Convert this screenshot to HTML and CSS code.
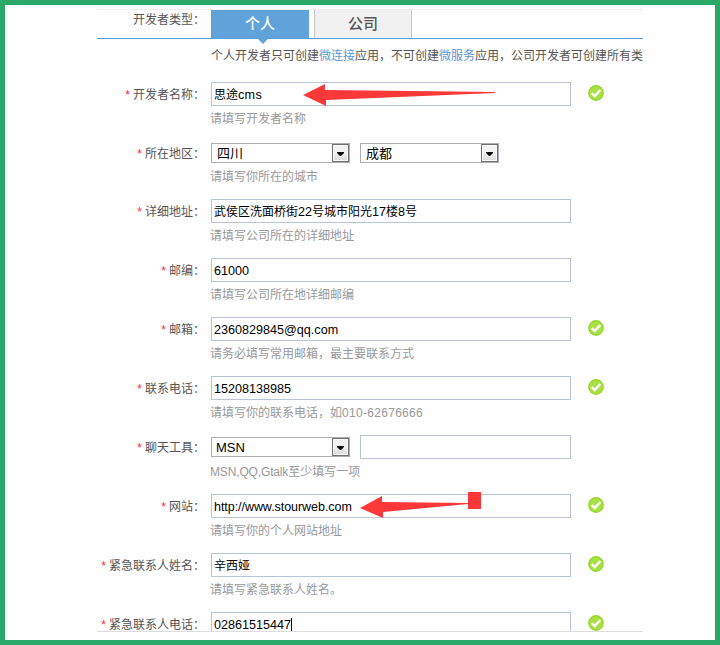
FILE: index.html
```html
<!DOCTYPE html>
<html lang="zh-CN">
<head>
<meta charset="utf-8">
<title>开发者信息</title>
<link rel="stylesheet" href="styles.css">
</head>
<body>
<svg class="defs" width="0" height="0">
  <defs>
    <symbol id="ok" viewBox="0 0 16 16">
      <circle cx="8" cy="8" r="7.9" fill="#98d62c"/>
      <circle cx="8" cy="8" r="6.6" fill="#a8e046"/>
      <path d="M3.7 8.2 6.7 11 12.3 5" fill="none" stroke="#fff" stroke-width="2.4"/>
    </symbol>
    <symbol id="drop" viewBox="0 0 7 4"><path d="M0 0H7V1L4 4H3L0 1Z" fill="#000"/></symbol>
  </defs>
</svg>
<main class="panel">
  <div class="type">
    <div class="label">开发者类型：</div>
    <div class="tabs"><div class="tab active">个人</div><div class="tab company">公司</div></div>
  </div>
  <p class="note">个人开发者只可创建<a>微连接</a>应用，不可创建<a>微服务</a>应用，公司开发者可创建所有类</p>

  <div class="row first">
    <div class="label"><i>*</i>开发者名称：</div>
    <div class="field">
      <div class="controls"><div class="input">思途<span class="cms">cms</span></div><svg class="ok"><use href="#ok"/></svg></div>
      <div class="hint">请填写开发者名称</div>
    </div>
    <svg class="arrow one" width="194" height="24" viewBox="0 0 194 24"><path d="M0 11 22 0V6L192 8V9L23 16V22Z" fill="#fd3838"/></svg>
  </div>
  <div class="row region">
    <div class="label"><i>*</i>所在地区：</div>
    <div class="field">
      <div class="controls"><div class="select">四川<b><svg class="drop"><use href="#drop"/></svg></b></div><div class="select">成都<b><svg class="drop"><use href="#drop"/></svg></b></div></div>
      <div class="hint">请填写你所在的城市</div>
    </div>
  </div>
  <div class="row">
    <div class="label"><i>*</i>详细地址：</div>
    <div class="field">
      <div class="controls"><div class="input">武侯区洗面桥街<span>22</span>号城市阳光<span>17</span>楼<span>8</span>号</div></div>
      <div class="hint">请填写公司所在的详细地址</div>
    </div>
  </div>
  <div class="row">
    <div class="label"><i>*</i>邮编：</div>
    <div class="field">
      <div class="controls"><div class="input"><span>61000</span></div></div>
      <div class="hint">请填写公司所在地详细邮编</div>
    </div>
  </div>
  <div class="row">
    <div class="label"><i>*</i>邮箱：</div>
    <div class="field">
      <div class="controls"><div class="input"><span>2360829845@qq.com</span></div><svg class="ok"><use href="#ok"/></svg></div>
      <div class="hint">请务必填写常用邮箱，最主要联系方式</div>
    </div>
  </div>
  <div class="row">
    <div class="label"><i>*</i>联系电话：</div>
    <div class="field">
      <div class="controls"><div class="input"><span>15208138985</span></div><svg class="ok"><use href="#ok"/></svg></div>
      <div class="hint">请填写你的联系电话，如<span>010-62676666</span></div>
    </div>
  </div>
  <div class="row chat">
    <div class="label"><i>*</i>聊天工具：</div>
    <div class="field">
      <div class="controls"><div class="select">MSN<b><svg class="drop"><use href="#drop"/></svg></b></div><div class="input short"></div></div>
      <div class="hint"><span class="tight">MSN,QQ,Gtalk</span>至少填写一项</div>
    </div>
  </div>
  <div class="row">
    <div class="label"><i>*</i>网站：</div>
    <div class="field">
      <div class="controls"><div class="input"><span class="url">http://www.stourweb.com</span></div><svg class="ok"><use href="#ok"/></svg></div>
      <div class="hint">请填写你的个人网站地址</div>
    </div>
    <svg class="arrow two" width="122" height="28" viewBox="0 0 122 28"><path d="M0 16 22 4V10L108 11V12L23 20V26Z" fill="#fd3838"/><path d="M108 0H121V17H108Z" fill="#fd3838"/></svg>
  </div>
  <div class="row">
    <div class="label"><i>*</i>紧急联系人姓名：</div>
    <div class="field">
      <div class="controls"><div class="input">辛西娅</div><svg class="ok"><use href="#ok"/></svg></div>
      <div class="hint">请填写紧急联系人姓名。</div>
    </div>
  </div>
  <div class="row">
    <div class="label"><i>*</i>紧急联系人电话：</div>
    <div class="field">
      <div class="controls"><div class="input"><span>02861515447</span><em class="caret"></em></div><svg class="ok"><use href="#ok"/></svg></div>
    </div>
  </div>
</main>
</body>
</html>
```
FILE: styles.css
```css
* { box-sizing: border-box; }
body {
  margin: 0;
  height: 645px;
  border: 5px solid #2aa869;
  background: #fefefe;
  padding: 4px 0 0 92px;
  overflow: hidden;
  color: #555;
  font: 12px/18px "Liberation Sans", "Noto Sans CJK SC", sans-serif;
}
.defs { position: absolute; }
.panel {
  width: 546px;
  height: 623px;
  overflow: hidden;
  border-top: 1px solid #eee;
  border-bottom: 1px solid #ddd;
}
.type {
  display: flex;
  height: 29px;
  border-bottom: 1px solid #5c9fd8;
}
.label {
  width: 109px;
  flex: none;
  text-align: right;
  white-space: nowrap;
  padding-right: 1px;
}
.type .label { margin-right: 5px; padding-top: 1px; }
.label i {
  font-style: normal;
  color: #ff2a3a;
  margin-right: 3px;
}
.tabs { display: flex; gap: 5px; height: 28px; }
.tab {
  position: relative;
  width: 98px;
  text-align: center;
  font-size: 15px;
  line-height: 27px;
  font-weight: 500;
}
.tab.active { background: #60a3da; color: #fff; }
.tab.active::after {
  content: "";
  position: absolute;
  left: 46px;
  top: 28px;
  border: 6px solid transparent;
  border-top: 6px solid #60a3da;
  border-bottom: 0;
}
.tab.company { background: #f1f1f1; border: 1px solid #c6c6c6; border-width: 0 1px; }
.note {
  margin: 8px 0 17px 114px;
  height: 18px;
  white-space: nowrap;
}
.note a { color: #5b98d3; }
.row {
  position: relative;
  display: flex;
  gap: 5px;
  height: 59px;
}
.row.first { height: 58px; }
.row .label { padding-top: 4px; }
.row.region .label { padding-top: 5px; }
.controls {
  display: flex;
  align-items: center;
  gap: 10px;
  height: 24px;
}
.input {
  width: 360px;
  height: 24px;
  border: 1px solid #b9c4d5;
  background: #fff;
  color: #000;
  padding: 2px 0 0 2px;
  line-height: 20px;
  white-space: nowrap;
}
.input.short { width: 211px; }
.input span { font-size: 12.6px; line-height: 18px; }
.input .cms { letter-spacing: .3px; }
.input .url { font-size: 12.5px; letter-spacing: -.05px; }
.hint span { letter-spacing: .3px; }
.hint .tight { letter-spacing: -.15px; }
.ok { width: 16px; height: 16px; margin: -2px 0 0 7px; }
.select {
  display: flex;
  justify-content: space-between;
  width: 139px;
  height: 20px;
  margin-top: 2px;
  border: 1px solid #abadb3;
  background: #fff;
  color: #000;
  padding-left: 5px;
  font-size: 13px;
  line-height: 19px;
}
.chat .select { margin-top: 0; padding-left: 4px; }
.select b {
  display: flex;
  align-items: center;
  justify-content: center;
  width: 17px;
  height: 18px;
  border: 1px solid #707070;
  background: linear-gradient(#f2f2f2 50%, #d8d8d8);
  box-shadow: inset 0 0 0 1px #fafafa;
}
.drop { width: 7px; height: 4px; margin-top: 2px; }
.hint { margin-top: 4px; margin-left: -1px; color: #999; white-space: nowrap; }
.caret {
  display: inline-block;
  width: 1px;
  height: 15px;
  background: #000;
  vertical-align: -4px;
}
.arrow { position: absolute; }
.one { left: 206px; top: 2px; }
.two { left: 263px; top: -2px; }
```
